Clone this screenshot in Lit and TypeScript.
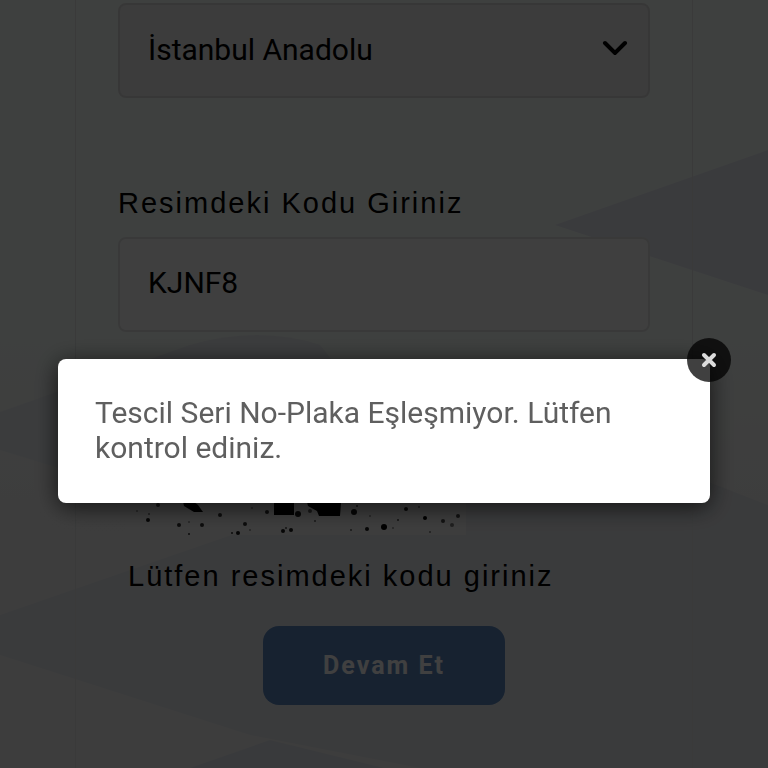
import { LitElement, html, css, svg } from "lit";
import { customElement, state } from "lit/decorators.js";

type Speck = [x: number, y: number, r: number, opacity: number];

const SPECKS: Speck[] = [
  [11, 151, 1, 0.4], [32, 145, 2, 0.7], [22, 160, 2, 0.9], [23, 154, 1, 0.5],
  [53, 165, 2, 0.8], [63, 174, 1, 0.8], [63, 162, 1, 0.4], [76, 165, 2, 0.8],
  [94, 155, 2, 0.8], [106, 173, 1, 0.8], [112, 173, 2, 0.9], [119, 164, 2, 0.8],
  [124, 170, 1, 0.4], [126, 148, 1, 0.4], [141, 152, 2, 0.8], [157, 171, 2, 0.9],
  [160, 168, 1, 0.7], [165, 170, 2, 0.9], [172, 154, 3, 0.9], [184, 151, 2, 0.6],
  [189, 161, 1, 0.6], [228, 152, 3, 0.9], [231, 146, 1, 0.7], [225, 170, 1, 0.6],
  [241, 169, 2, 0.9], [244, 156, 1, 0.4], [258, 167, 3, 1], [267, 168, 1, 0.4],
  [272, 160, 1, 0.7], [280, 149, 2, 0.9], [293, 147, 1, 0.5], [299, 158, 2, 1],
  [304, 172, 1, 0.5], [317, 161, 2, 0.7], [326, 165, 2, 0.5], [332, 156, 2, 0.7],
];

@customElement("app-root")
export class AppRoot extends LitElement {
  static styles = css`
    :host {
      display: block;
      font-family: Roboto, "Liberation Sans", sans-serif;
      font-size: 30px;
      color: #000;
    }
    * {
      box-sizing: border-box;
    }
    .page {
      position: relative;
      min-height: 100vh;
      overflow: hidden;
      background: #f8fffb;
    }
    .backdrop {
      position: absolute;
      inset: 0;
      width: 100%;
      height: 100%;
    }
    .card {
      position: relative;
      display: flex;
      flex-direction: column;
      min-height: 100vh;
      margin: 0 75px;
      padding: 3px 42px 63px;
      border: solid #e6e8e8;
      border-width: 0 1px;
    }
    .select {
      position: relative;
      display: flex;
    }
    .control {
      width: 100%;
      height: 95px;
      margin: 0;
      padding: 0 28px 4px;
      border: 2px solid #e2e4e4;
      border-radius: 8px;
      background: #fcfcfc;
      color: #000;
      font: inherit;
      appearance: none;
      outline: none;
    }
    .control.dropdown {
      padding-bottom: 2px;
      background: #ededed;
      border-color: #dcdcdc;
    }
    .chevron {
      position: absolute;
      right: 22px;
      top: 36px;
      width: 26px;
      height: 16px;
      pointer-events: none;
    }
    .label,
    .hint {
      font-family: "Liberation Sans", sans-serif;
      font-size: 29px;
      letter-spacing: 2px;
      line-height: 35px;
    }
    .label {
      margin: 88px 0 16px;
    }
    .captcha {
      width: 340px;
      height: 175px;
      margin: 28px 0 24px 8px;
    }
    .hint {
      margin: 0 10px 32px;
    }
    .submit {
      align-self: center;
      width: 242px;
      height: 79px;
      padding: 0;
      border: 0;
      border-radius: 16px;
      background: #5c88c0;
      color: #fff;
      font: 700 25px/35px Roboto, sans-serif;
      letter-spacing: 2px;
    }
    .overlay {
      position: fixed;
      inset: 0;
      display: flex;
      justify-content: center;
      align-items: flex-start;
      padding: 359px 58px 0;
      background: rgba(0, 0, 0, 0.75);
    }
    .dialog {
      position: relative;
      width: 100%;
      padding: 36px 37px 38px;
      border-radius: 8px;
      background: #fff;
      color: #5f5f5f;
      line-height: 35px;
      box-shadow: 0 4px 24px rgba(0, 0, 0, 0.7);
    }
    .message {
      margin: 0;
    }
    .close {
      position: absolute;
      top: -21px;
      right: -21px;
      display: grid;
      place-items: center;
      width: 44px;
      height: 44px;
      padding: 0;
      border: 0;
      border-radius: 50%;
      background: rgba(0, 0, 0, 0.75);
    }
    .cross {
      width: 18px;
      height: 18px;
    }
  `;

  @state() private open = true;

  private renderBackdrop() {
    return html`
      <svg class="backdrop" viewBox="0 0 768 768" preserveAspectRatio="none" aria-hidden="true">
        <defs>
          <linearGradient id="base" x1="0" y1="0" x2="0" y2="1">
            <stop offset="0.4" stop-color="#f8fffb" />
            <stop offset="0.65" stop-color="#f4f4f4" />
            <stop offset="1" stop-color="#f3f3f3" />
          </linearGradient>
        </defs>
        <rect width="768" height="768" fill="url(#base)" />
        <path d="M555 225 768 150V295Z" fill="#e8ebf4" />
        <path d="M0 412 190 345Q260 325 320 345L420 470 180 505 0 450Z" fill="#ecf0f4" />
        <path d="M0 615 130 570 260 525 600 440 768 505V768H420L250 735 0 655Z" fill="#e8ebef" />
        <path d="M190 768 270 740 384 768Z" fill="#e4e8ef" />
      </svg>
    `;
  }

  private renderCaptcha() {
    return html`
      <svg class="captcha" viewBox="0 0 340 175" role="img" aria-label="Resimdeki kod">
        <rect width="340" height="175" fill="#f4f4f4" />
        <path d="M55 132 72 145 77 152 68 152 58 146Z" />
        <path d="M148 130H168V155H148Z" />
        <path d="M178 130H216L214 156H193L191 151 182 146Z" />
        ${SPECKS.map(([x, y, r, o]) => svg`<circle cx=${x} cy=${y} r=${r} opacity=${o} />`)}
      </svg>
    `;
  }

  render() {
    return html`
      <main class="page">
        ${this.renderBackdrop()}
        <form class="card" @submit=${(e: Event) => e.preventDefault()}>
          <div class="select">
            <select class="control dropdown" aria-label="Adliye">
              <option>İstanbul Anadolu</option>
            </select>
            <svg class="chevron" viewBox="0 0 26 16" fill="none" aria-hidden="true">
              <path d="M3 4 13 14 23 4" stroke="#000" stroke-width="4" stroke-linecap="round" />
            </svg>
          </div>
          <label class="label" for="code">Resimdeki Kodu Giriniz</label>
          <input class="control" id="code" type="text" value="KJNF8" autocomplete="off" />
          ${this.renderCaptcha()}
          <p class="hint">Lütfen resimdeki kodu giriniz</p>
          <button class="submit" type="submit">Devam Et</button>
        </form>
      </main>
      ${this.open
        ? html`
            <div class="overlay">
              <div class="dialog" role="alertdialog" aria-modal="true" aria-describedby="message">
                <p class="message" id="message">
                  Tescil Seri No-Plaka Eşleşmiyor. Lütfen kontrol ediniz.
                </p>
                <button class="close" type="button" aria-label="Kapat" @click=${() => (this.open = false)}>
                  <svg class="cross" viewBox="0 0 18 18" aria-hidden="true">
                    <path
                      d="M4 4 14 14M14 4 4 14"
                      stroke="#dcdcdc"
                      stroke-width="4"
                      stroke-linecap="round"
                    />
                  </svg>
                </button>
              </div>
            </div>
          `
        : null}
    `;
  }
}
